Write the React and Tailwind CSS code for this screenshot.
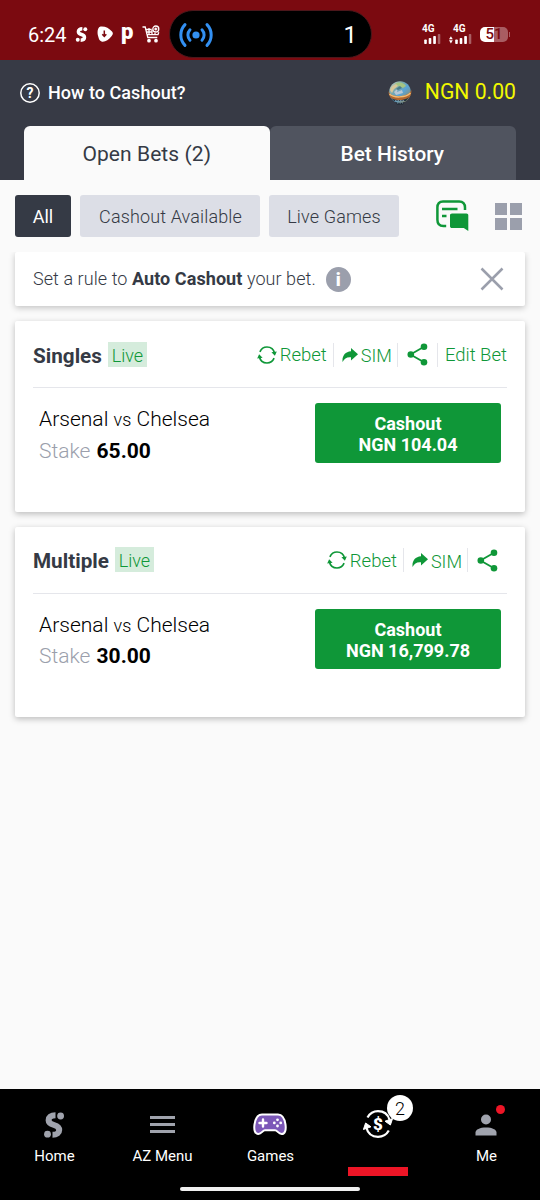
import React from 'react';
import clsx from 'clsx';

const bets = [
  { id: 1, type: 'Singles', home: 'Arsenal', away: 'Chelsea', stake: '65.00', cashout: 'NGN 104.04', editable: true },
  { id: 2, type: 'Multiple', home: 'Arsenal', away: 'Chelsea', stake: '30.00', cashout: 'NGN 16,799.78', editable: false }
];

// Brand mark: a thick curve with a dot at each end
const BrandIcon = ({ className }) => (
  <svg viewBox="0 0 20 26" className={className} fill="none">
    <path d="M11.500 3.200C6.800 3.200 4.600 5.400 4.600 8.200c0 2.800 2.200 3.800 5.400 4.800 3.400 1.100 5.200 2.100 5.200 4.900 0 2.800-2.300 4.900-6.700 4.900" stroke="currentColor" strokeWidth="6" />
    <circle cx="16.600" cy="4" r="3.400" fill="currentColor" stroke="none" />
    <circle cx="3.500" cy="22.200" r="3.400" fill="currentColor" stroke="none" />
  </svg>
);

const DownloadIcon = () => (
  <svg viewBox="0 0 16 16" className="h-4 w-4">
    <path d="M3.500.500C8 0 12 2 15 5.500c1.400 1.600 1 3.200-.5 4.700C11.500 14 7.500 16.500 4.500 15.500 2 14.500 1.800 12.500.8 9 .200 6 .500 1.200 3.500.500Z" fill="#fff" />
    <path d="M7.300 4.500v6M5.300 8.300l2 2.200 2-2.200" stroke="#7b0a10" strokeWidth="1.500" fill="none" />
  </svg>
);

const CartIcon = () => (
  <svg viewBox="0 0 18 18" className="h-[18px] w-[18px]" fill="none" stroke="#fff" strokeWidth="1.300">
    <path d="M.5 2h2.700l2.600 10.500h9.500M3.700 4.500h6M4.300 7h6M5 9.700h11l.8-2.500M7 3v7M10 5v5M13 8v2" />
    <circle cx="13.800" cy="4" r="3" />
    <path d="M13.800 2.500v3M12.300 4h3" />
    <circle cx="7" cy="15.700" r="1.200" fill="#fff" />
    <circle cx="14" cy="15.700" r="1.200" fill="#fff" />
  </svg>
);

const HotspotIcon = () => (
  <svg viewBox="0 0 34 26" className="h-[26px] w-[34px]" fill="none" stroke="#3390f2" strokeWidth="3" strokeLinecap="round">
    <circle cx="17" cy="13" r="3.600" fill="#3390f2" stroke="none" />
    <path d="M11 7.800a7.500 7.500 0 0 0 0 10.400M23 7.800a7.500 7.500 0 0 1 0 10.400M6 2.600a15 15 0 0 0 0 20.800M28 2.600a15 15 0 0 1 0 20.800" />
  </svg>
);

const SignalIcon = ({ data }) => (
  <div className={clsx('flex flex-col', data ? 'w-[23px]' : 'w-[18px]')}>
    <span className={clsx('-ml-px text-[10px] leading-[8px] font-bold', data && 'pl-[5px]')}>4G</span>
    <svg viewBox="0 0 23 11" className={clsx('h-[11px] w-[23px]', !data && '-ml-[5px]')} fill="#fff">
      {data && <path d="M1.900 3.200 3.800 6.200H0ZM1.900 10.400 0 7.200h3.800Z" />}
      <rect x="6.200" y="6.500" width="2.600" height="4.500" rx=".8" />
      <rect x="10.700" y="5" width="2.600" height="6" rx=".8" />
      <rect x="15.200" y="3" width="2.700" height="8" rx=".8" />
      <rect x="19.800" y="1" width="2.500" height="10" rx=".8" opacity=".35" />
    </svg>
  </div>
);

const BallIcon = () => (
  <svg viewBox="0 0 26 26" className="h-[26px] w-[26px]">
    <defs>
      <linearGradient id="ball" x1="0" y1="0" x2="1" y2="1">
        <stop offset="0" stopColor="#d5d7c2" />
        <stop offset=".35" stopColor="#76a7ad" />
        <stop offset=".55" stopColor="#5aa5d6" />
        <stop offset="1" stopColor="#9b8042" />
      </linearGradient>
    </defs>
    <path d="M7 18h12l-3 6.500h-6Z" fill="#1c2730" />
    <circle cx="13" cy="12" r="10.800" fill="url(#ball)" />
    <path d="M8 4c4-3 9-1 11 2l-3 2-5-2-4 3Z" fill="#a5c583" />
    <path d="M3 10c1-3 3-5 6-6l2 2-4 3-2 4Z" fill="#d9c79a" />
    <path d="M7 12l4-4-1 4 5-2 1 3-7 2Z" fill="#b7c8d5" />
    <path d="M9 9l4-3 2 2-4 2Z" fill="#4b7c8a" />
    <path d="M1.500 11c1 4 5 5 11 5 5 0 10-2 12-6 0 4-1 7-4 9-5 2-10 2-15 0-3-2-4-4-4-8Z" fill="#b2672f" />
    <path d="M2.500 14c4 4 16 4 21-1" stroke="#efbc75" strokeWidth="1.500" fill="none" />
    <path d="M4 18c5 3 13 3 18-1l-3 4H7Z" fill="#25353e" />
    <path d="M8 20.500h10M10 23h6" stroke="#72889a" strokeWidth="1" strokeDasharray="1.500 1" />
  </svg>
);

const RebetIcon = () => (
  <svg viewBox="0 0 20 20" className="h-5 w-5" fill="none" stroke="currentColor" strokeWidth="1.700">
    <path d="M2.900 6.800C4.300 3.600 6.800 2 10 2c4 0 6.800 2.700 7.600 6.300M17.100 13.200C15.700 16.400 13.200 18 10 18c-4 0-6.800-2.700-7.600-6.300" />
    <path d="M14.400 7.300l5.400-.9-1.900 4.400ZM5.600 12.700l-5.400.9 1.900-4.400Z" fill="currentColor" stroke="none" />
  </svg>
);

const ForwardIcon = () => (
  <svg viewBox="0 0 16 14" className="h-[14px] w-4" fill="currentColor">
    <path d="M9 0l7 6.200-7 6.300V9.200C4.800 8.800 2.400 10.200.6 14-.2 8.300 2.800 3.700 9 3.200Z" />
  </svg>
);

const ShareIcon = () => (
  <svg viewBox="0 0 21 23" className="h-[23px] w-[21px]" fill="currentColor">
    <path d="M17 3.800 3.500 11.500 17 19.300" fill="none" stroke="currentColor" strokeWidth="1.800" />
    <circle cx="17" cy="3.800" r="3.300" />
    <circle cx="3.800" cy="11.500" r="3.300" />
    <circle cx="17" cy="19.300" r="3.300" />
  </svg>
);

const StatusBar = () => (
  <div className="flex h-[60px] items-start bg-[#7b0a10] text-white">
    <div className="flex h-[60px] w-[169px] shrink-0 items-center pt-2 pl-7">
      <span className="w-[47px] pt-px text-[20px] leading-6">6:24</span>
      <BrandIcon className="h-[15px] w-[13px]" />
      <div className="ml-[9px]"><DownloadIcon /></div>
      <span className="-mt-1 ml-2 w-[14px] text-[22px] leading-5 font-black">p</span>
      <div className="ml-[7px]"><CartIcon /></div>
    </div>
    <div className="mt-[10px] flex h-12 w-[203px] items-center justify-between rounded-full border border-[#4c171b] bg-black pt-px pr-[14px] pl-[9px]">
      <HotspotIcon />
      <span className="pt-px text-[24px] leading-6">1</span>
    </div>
    <div className="flex h-[60px] items-center pt-2 pl-[51px]">
      <SignalIcon />
      <div className="w-[8px]" />
      <SignalIcon data />
      <div className="ml-2 flex h-[15px] w-7 items-center justify-center rounded-[5px] bg-linear-to-r from-white from-50% to-[#a95d62] to-50% text-[15px] leading-4 font-medium text-[#7b0a10]">51</div>
      <div className="ml-px h-[5px] w-px bg-[#a95d62]" />
    </div>
  </div>
);

const Header = () => (
  <header className="flex h-[120px] flex-col bg-[#373a45]">
    <div className="flex h-[66px] items-center px-5 text-white">
      <svg viewBox="0 0 20 20" className="h-5 w-5">
        <circle cx="10" cy="10" r="9.200" fill="none" stroke="#fff" strokeWidth="1.500" />
        <text x="10" y="15" textAnchor="middle" fill="#fff" className="text-[14px] font-bold">?</text>
      </svg>
      <span className="-mt-0.5 ml-2 text-[18px] tracking-[0.040px] font-medium">How to Cashout?</span>
      <div className="mr-1 ml-auto flex items-center gap-3">
        <BallIcon />
        <span className="-mt-0.5 text-[21.200px] text-[#f2f900]">NGN 0.00</span>
      </div>
    </div>
    <div className="mx-6 flex h-[54px] text-[21px]">
      <div className="flex flex-1 items-center justify-center rounded-t-md bg-[#fafafa] pt-1 tracking-[0.080px] text-[#353a45]">Open Bets (2)</div>
      <div className="flex flex-1 items-center justify-center rounded-t-md bg-[#50545f] pt-1 pr-px text-[20.800px] font-medium text-white">Bet History</div>
    </div>
  </header>
);

const Filters = () => (
  <div className="flex h-[72px] items-center px-[15px] text-[18px] text-[#353a45]">
    <button className="h-[42px] w-14 rounded-[3px] bg-[#353a45] pt-px text-white">All</button>
    <button className="ml-[9px] h-[42px] w-[180px] rounded-[3px] bg-[#dcdee6] pt-px pl-px font-[350] tracking-[0.130px]">Cashout Available</button>
    <button className="ml-[9px] h-[42px] w-[130px] rounded-[3px] bg-[#dcdee6] pt-px font-[350] tracking-[0.150px]">Live Games</button>
    <svg viewBox="0 0 33 32" className="ml-[37px] h-8 w-[33px]" fill="none" stroke="#0f9738" strokeWidth="2.500">
      <path d="M29 10V7.500c0-3.800-2-6-5.800-6H7C3.200 1.500 1.400 3.700 1.400 7.500v12.200c0 4 2 6.300 6 6.300h2.800M6 9h15.500M6 16h4.500" />
      <path d="M16 13.500h14.500c1 0 1.800.8 1.800 1.800V31l-4.500-3H16c-1.200 0-2-.8-2-1.800V15.300c0-1 .8-1.800 2-1.800Z" fill="#0f9738" stroke="none" />
    </svg>
    <div className="ml-[26px] grid grid-cols-2 gap-[3px]">
      {[0, 1, 2, 3].map((n) => (
        <div key={n} className="h-3 w-3 bg-[#9b9fac]" />
      ))}
    </div>
  </div>
);

const BetCard = ({ bet }) => (
  <article className="h-[190.500px] rounded-xs bg-white px-[18px] shadow-[0_2px_6px_rgba(0,0,0,0.25)]">
    <div className="flex h-[67px] items-center border-b border-[#e5e6eb] text-[#0f9738]">
      <h2 className="pt-[5px] text-[20.700px] font-bold text-[#353a45]">{bet.type}</h2>
      <span className="ml-[6px] h-[25px] w-[39px] bg-[#d5ecdc] text-center text-[18px] leading-[27px] font-light">Live</span>
      <div className={clsx('ml-auto flex items-center pt-px text-[18.500px] font-light', !bet.editable && 'mr-[9px]')}>
        <RebetIcon />
        <span className="ml-[3px] pt-[3px]">Rebet</span>
        <div className="mr-2 ml-[6px] h-6 w-px bg-[#e5e6eb]" />
        <ForwardIcon />
        <span className="ml-[3px] pt-[3px] text-[18px] leading-6">SIM</span>
        <div className="mr-[9px] ml-[5px] h-6 w-px bg-[#e5e6eb]" />
        <ShareIcon />
        {bet.editable && (
          <>
            <div className="mr-[7px] ml-[9px] h-6 w-px bg-[#e5e6eb]" />
            <span className="pt-[3px]">Edit Bet</span>
          </>
        )}
      </div>
    </div>
    <div className="-mx-[18px] flex justify-between px-6 pt-[15px]">
      <div className="pt-px text-[21px] leading-[31.500px] font-light text-black">
        <p className="tracking-[0.020px]">{bet.home} <span className="text-[18px]">vs</span> {bet.away}</p>
        <p className="text-[#9b9fac]">Stake <span className="ml-px font-bold text-black">{bet.stake}</span></p>
      </div>
      <button className="h-[60px] w-[186px] rounded-[3px] bg-[#0f9738] pt-[2px] text-[18px] leading-[21px] font-bold text-white">
        Cashout<br />{bet.cashout}
      </button>
    </div>
  </article>
);

const NavItem = ({ label, children }) => (
  <div className="flex w-[108px] flex-col items-center pt-5 text-[15px] leading-5 text-white">
    <div className="flex h-8 items-center justify-center">{children}</div>
    {label && <span className="mt-[5px] ml-px">{label}</span>}
  </div>
);

const BottomNav = () => (
  <nav className="mt-auto flex h-[111px] flex-col bg-black">
    <div className="flex h-[98px] text-[#a0a3ad]">
      <NavItem label="Home"><BrandIcon className="h-[26px] w-5 text-[#a0a3ad]" /></NavItem>
      <NavItem label="AZ Menu">
        <div className="-mt-px flex flex-col gap-1">
          {[0, 1, 2].map((n) => (
            <div key={n} className="h-[3px] w-[25px] bg-[#a0a3ad]" />
          ))}
        </div>
      </NavItem>
      <NavItem label="Games">
        <svg viewBox="0 0 34 24" className="h-6 w-[34px]">
          <path d="M9 1.500h16c4.500 0 6.500 3.500 7.500 10 .8 5.500-.5 9.500-3.800 9.500-3.500 0-4.200-3.700-6.700-3.700H12c-2.500 0-3.200 3.700-6.700 3.700-3.300 0-4.600-4-3.800-9.500C2.500 5 4.500 1.500 9 1.500Z" fill="#7c58b8" stroke="#fff" strokeWidth="2" />
          <path d="M10 6.500v7M6.500 10h7" stroke="#fff" strokeWidth="2.400" strokeLinecap="round" />
          <g fill="#fff">
            <circle cx="24.500" cy="6.800" r="1.400" />
            <circle cx="24.500" cy="13" r="1.400" />
            <circle cx="21.300" cy="9.900" r="1.400" />
            <circle cx="27.700" cy="9.900" r="1.400" />
          </g>
        </svg>
      </NavItem>
      <div className="flex w-[108px] flex-col items-center pt-5">
        <div className="relative -mt-px flex h-8 items-center">
          <svg viewBox="0 0 30 30" className="h-[30px] w-[30px]" fill="none" stroke="#fff" strokeWidth="2.200">
            <path d="M4.500 8.500C6.800 4.400 10.300 2.200 15 2.200c6 0 10 3.400 11.500 8.500M25.800 21.500c-2.300 4.200-6 6.300-10.800 6.300-6.200 0-10.300-3.800-11.600-9" />
            <path d="M22 12.200l7.600-2.700-2.200 6.500ZM8 17.800.4 20.500l2.200-6.500Z" fill="#fff" strokeWidth="1" />
            <text x="15" y="21" textAnchor="middle" fill="#fff" stroke="none" className="text-[17px] font-black">$</text>
          </svg>
          <span className="absolute -top-[13px] left-[24px] h-[26px] w-[26px] rounded-full bg-white text-center text-[18px] leading-[27px] font-light text-black">2</span>
        </div>
        <div className="mt-[27px] h-[9px] w-[60px] bg-[#ed1526]" />
      </div>
      <NavItem label="Me">
        <div className="relative">
          <svg viewBox="0 0 22 22" className="h-[22px] w-[22px]" fill="#a0a3ad">
            <circle cx="11" cy="5.500" r="5" />
            <path d="M.5 21.500V18.500C.5 15.500 5 13.500 11 13.500s10.500 2 10.500 5v3Z" />
          </svg>
          <span className="absolute -top-[9px] left-[21px] h-[9px] w-[9px] rounded-full bg-[#ed1526]" />
        </div>
      </NavItem>
    </div>
    <div className="mx-auto h-1 w-[180px] rounded-full bg-[#f0f0f0]" />
  </nav>
);

const App = () => {
  return (
    <div className="flex h-[1200px] w-[540px] flex-col overflow-hidden bg-[#fafafa] font-['Roboto',sans-serif]">
      <StatusBar />
      <Header />
      <Filters />
      <main className="flex flex-col gap-[15px] overflow-hidden px-[15px] pb-3">
        <div className="flex h-[54px] items-center rounded-xs bg-white px-[18px] text-[18px] font-light text-[#353a45] shadow-[0_2px_6px_rgba(0,0,0,0.22)]">
          <span className="-mt-px tracking-[0.070px]">Set a rule to <b className="font-bold">Auto Cashout</b> your bet.</span>
          <span className="ml-[10px] flex h-[25px] w-[25px] items-center justify-center rounded-full bg-[#9b9fac] text-[18px] font-black text-white">i</span>
          <svg viewBox="0 0 24 24" className="mr-[3px] ml-auto h-6 w-6" stroke="#9b9fac" strokeWidth="2.500">
            <path d="M1.500 1.500l21 21M22.500 1.500l-21 21" />
          </svg>
        </div>
        {bets.map((bet) => (
          <BetCard key={bet.id} bet={bet} />
        ))}
      </main>
      <BottomNav />
    </div>
  );
};

export default App;
